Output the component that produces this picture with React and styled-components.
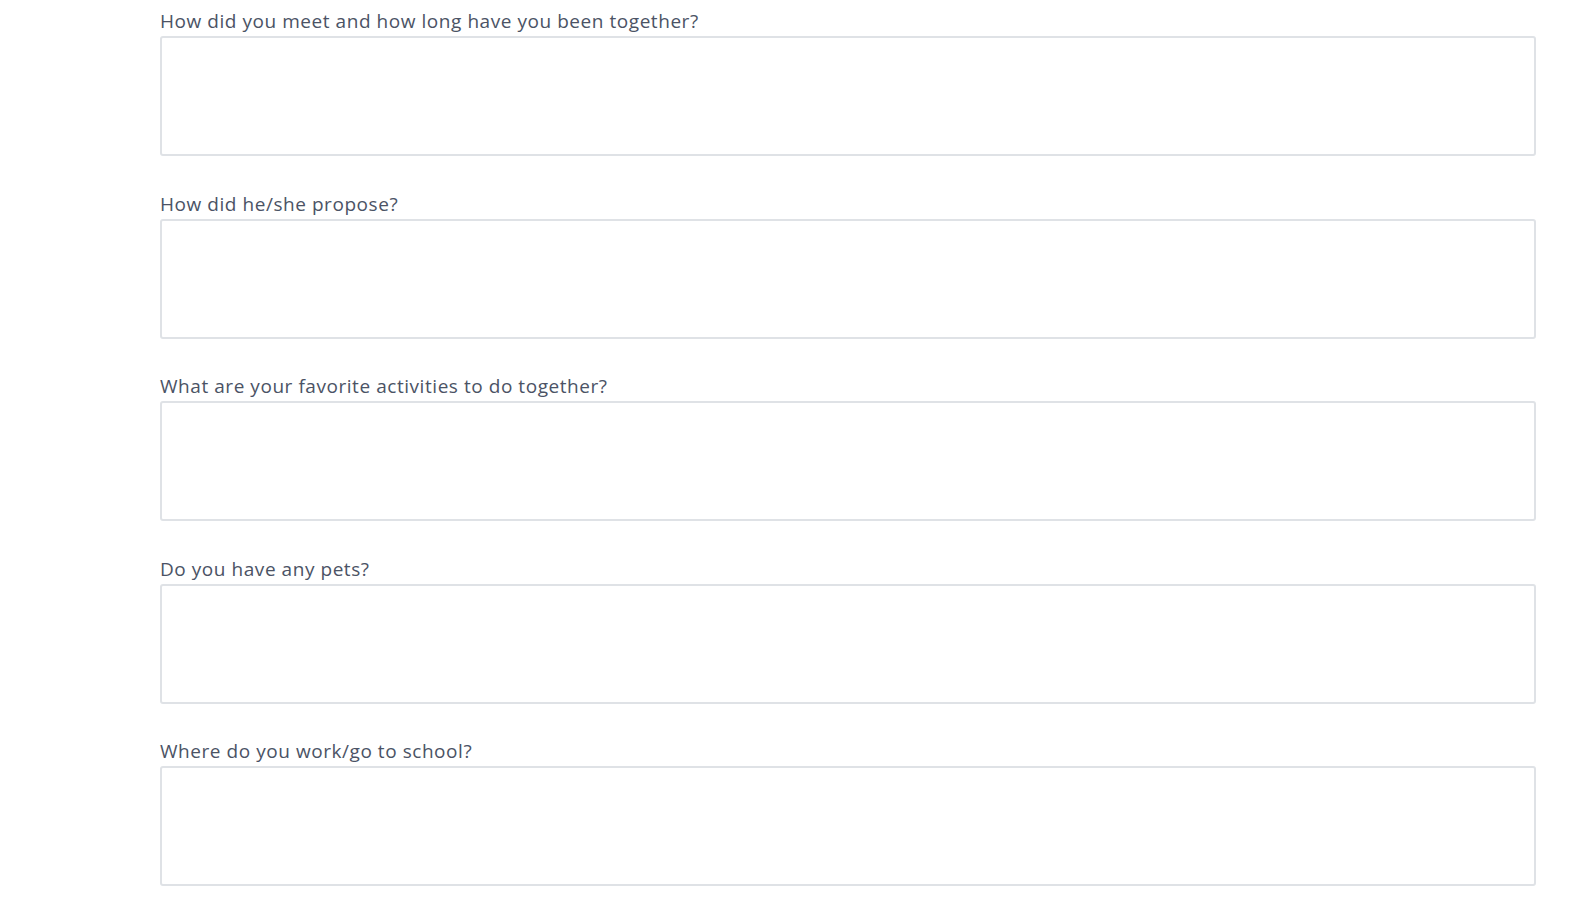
import React from 'react';
import styled, { createGlobalStyle } from 'styled-components';

const GlobalStyle = createGlobalStyle`
  html, body {
    margin: 0;
    padding: 0;
    background: #ffffff;
  }
  body {
    font-family: "Open Sans", Lato, Arial, sans-serif;
  }
`;

const Form = styled.form`
  display: flex;
  flex-direction: column;
  gap: 36.5px;
  width: 1376px;
  padding: 10px 0 0 160px;
`;

const Field = styled.div`
  display: flex;
  flex-direction: column;
`;

const Label = styled.label`
  font-family: "Open Sans", Lato, Arial, sans-serif;
  font-size: 19px;
  line-height: 22px;
  letter-spacing: 0.55px;
  color: #4b5365;
  margin-bottom: 4px;
  white-space: nowrap;
`;

const TextArea = styled.textarea`
  box-sizing: border-box;
  width: 100%;
  height: 120px;
  border: 2px solid #dfe2e6;
  border-radius: 3px;
  background: #fff;
  resize: none;
  padding: 10px 14px;
  font-family: inherit;
  font-size: 16px;
  color: #4b5365;
  outline: none;
`;

const questions = [
  'How did you meet and how long have you been together?',
  'How did he/she propose?',
  'What are your favorite activities to do together?',
  'Do you have any pets?',
  'Where do you work/go to school?',
];

export default function App() {
  return (
    <>
      <GlobalStyle />
      <Form>
        {questions.map((q, i) => (
          <Field key={i}>
            <Label htmlFor={`q${i}`}>{q}</Label>
            <TextArea id={`q${i}`} />
          </Field>
        ))}
      </Form>
    </>
  );
}
